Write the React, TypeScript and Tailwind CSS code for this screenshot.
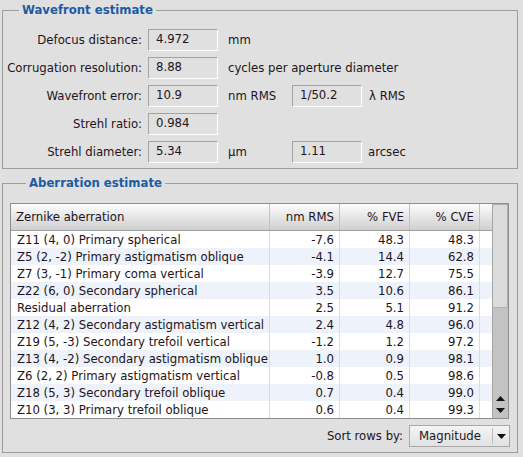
import React from 'react';

const rows = [
  { name: 'Z11 (4, 0) Primary spherical', rms: '-7.6', fve: '48.3', cve: '48.3' },
  { name: 'Z5 (2, -2) Primary astigmatism oblique', rms: '-4.1', fve: '14.4', cve: '62.8' },
  { name: 'Z7 (3, -1) Primary coma vertical', rms: '-3.9', fve: '12.7', cve: '75.5' },
  { name: 'Z22 (6, 0) Secondary spherical', rms: '3.5', fve: '10.6', cve: '86.1' },
  { name: 'Residual aberration', rms: '2.5', fve: '5.1', cve: '91.2' },
  { name: 'Z12 (4, 2) Secondary astigmatism vertical', rms: '2.4', fve: '4.8', cve: '96.0' },
  { name: 'Z19 (5, -3) Secondary trefoil vertical', rms: '-1.2', fve: '1.2', cve: '97.2' },
  { name: 'Z13 (4, -2) Secondary astigmatism oblique', rms: '1.0', fve: '0.9', cve: '98.1' },
  { name: 'Z6 (2, 2) Primary astigmatism vertical', rms: '-0.8', fve: '0.5', cve: '98.6' },
  { name: 'Z18 (5, 3) Secondary trefoil oblique', rms: '0.7', fve: '0.4', cve: '99.0' },
  { name: 'Z10 (3, 3) Primary trefoil oblique', rms: '0.6', fve: '0.4', cve: '99.3' },
];

function Box({ value }: { value: string }) {
  return (
    <div className="w-[70px] h-[22px] border border-t-[#a3a3a3] border-l-[#a3a3a3] border-b-white border-r-white pl-[7px] leading-[18px]">
      {value}
    </div>
  );
}

function Row({ label, value, unit, children }: { label: string; value: string; unit?: string; children?: React.ReactNode }) {
  return (
    <div className="flex items-center h-[22px]">
      <div className="w-[139px] text-right">{label}</div>
      <div className="ml-[6px]">
        <Box value={value} />
      </div>
      <div className={children ? 'w-[74px] pl-[10px]' : 'pl-[10px]'}>{unit}</div>
      {children}
    </div>
  );
}

export default function App() {
  return (
    <div className="w-[523px] h-[457px] bg-[#e0e0e0] text-[#1e1420] text-[13px] font-['DejaVu_Sans_Condensed','DejaVu_Sans',sans-serif] pl-[2px] pr-[5px] pt-[2px] overflow-hidden">
      <fieldset className="border border-[#9d9d9d] h-[167px] pt-[11px]">
        <legend className="ml-[16px] px-[3px] text-[13px] font-bold text-[#1d5ba3] leading-[16px]">Wavefront estimate</legend>
        <div className="flex flex-col gap-[6px]">
          <Row label="Defocus distance:" value="4.972" unit="mm" />
          <Row label="Corrugation resolution:" value="8.88" unit="cycles per aperture diameter" />
          <Row label="Wavefront error:" value="10.9" unit="nm RMS">
            <Box value="1/50.2" />
            <div className="pl-[7px]">λ RMS</div>
          </Row>
          <Row label="Strehl ratio:" value="0.984" />
          <Row label="Strehl diameter:" value="5.34" unit="µm">
            <Box value="1.11" />
            <div className="pl-[6px]">arcsec</div>
          </Row>
        </div>
      </fieldset>

      <fieldset className="border border-[#9d9d9d] h-[278px] mt-[6px] px-[7px] pt-[12px]">
        <legend className="ml-[16px] px-[3px] text-[13px] font-bold text-[#1d5ba3] leading-[16px]">Aberration estimate</legend>
        <div className="flex border border-[#8e8e8e] h-[216px] w-[499px] bg-white">
          <div className="flex-1 flex flex-col">
            <div className="flex h-[27px] shrink-0 bg-gradient-to-b from-[#fdfdfd] to-[#cfcfcf] border-b border-[#a0a0a0]">
              <div className="w-[259px] pl-[5px] flex items-center border-r border-[#c2c2c2]">Zernike aberration</div>
              <div className="w-[70px] pr-[5px] flex items-center justify-end border-r border-[#c2c2c2]">nm RMS</div>
              <div className="w-[70px] pr-[5px] flex items-center justify-end border-r border-[#c2c2c2]">% FVE</div>
              <div className="w-[70px] pr-[5px] flex items-center justify-end border-r border-[#c2c2c2]">% CVE</div>
              <div className="flex-1" />
            </div>
            {rows.map((r, i) => (
              <div key={r.name} className={`flex h-[17px] leading-[17px] ${i % 2 === 1 ? 'bg-[#edf2fb]' : 'bg-white'}`}>
                <div className="w-[259px] pl-[6px] whitespace-nowrap overflow-hidden border-r border-[#dcdcdc]">{r.name}</div>
                <div className="w-[70px] pr-[5px] text-right border-r border-[#dcdcdc]">{r.rms}</div>
                <div className="w-[70px] pr-[5px] text-right border-r border-[#dcdcdc]">{r.fve}</div>
                <div className="w-[70px] pr-[5px] text-right border-r border-[#dcdcdc]">{r.cve}</div>
                <div className="flex-1" />
              </div>
            ))}
          </div>
          <div className="w-[16px] bg-[#c3c3c3] border-l border-[#a6a6a6] flex flex-col">
            <div className="h-[104px] bg-[#dcdcdc] border border-[#b0b0b0] border-l-0" />
            <div className="flex-1" />
            <div className="flex flex-col items-center gap-[7px] pb-[5px]">
              <svg width="9" height="5" viewBox="0 0 9 5"><path d="M0 5 L4.5 0 L9 5 Z" fill="#111" /></svg>
              <svg width="9" height="5" viewBox="0 0 9 5"><path d="M0 0 L4.5 5 L9 0 Z" fill="#111" /></svg>
            </div>
          </div>
        </div>
        <div className="flex items-center justify-end mt-[6px]">
          <span className="mr-[6px]">Sort rows by:</span>
          <div className="flex w-[101px] h-[22px] border border-[#a8a8a8] bg-gradient-to-b from-[#f4f4f4] to-[#e2e2e2]">
            <div className="flex-1 pl-[9px] leading-[20px]">Magnitude</div>
            <div className="w-[17px] border-l border-[#bdbdbd] my-[2px] flex items-center justify-center">
              <svg width="9" height="5" viewBox="0 0 9 5"><path d="M0 0 L4.5 5 L9 0 Z" fill="#111" /></svg>
            </div>
          </div>
        </div>
      </fieldset>
    </div>
  );
}
